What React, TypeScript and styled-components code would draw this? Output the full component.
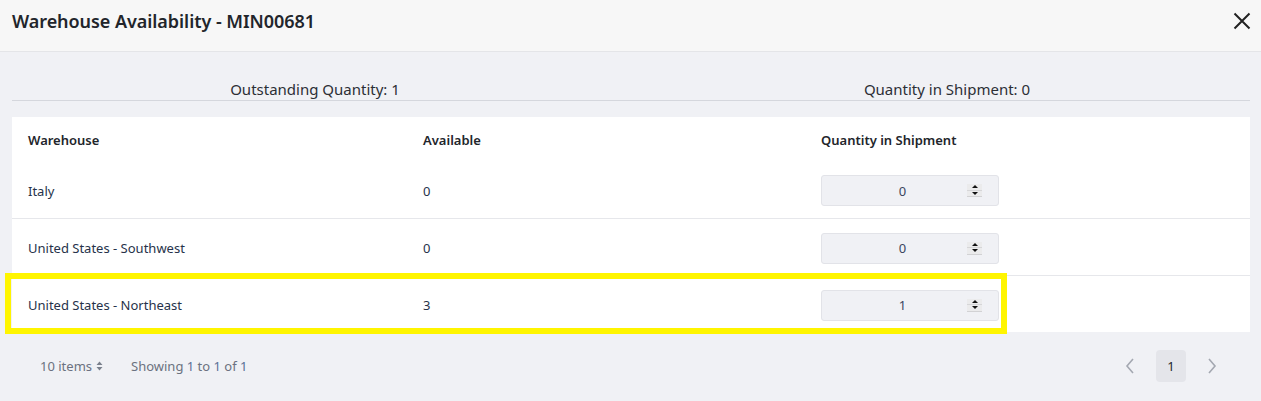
import React from "react";
import styled, { createGlobalStyle } from "styled-components";

const GlobalStyle = createGlobalStyle`
  html, body { margin: 0; padding: 0; }
  body {
    background: #f0f1f5;
    font-family: "Noto Sans", "Open Sans", Arial, sans-serif;
    color: #253148;
  }
  * { box-sizing: border-box; }
`;

const Dialog = styled.div`
  width: 1261px;
  height: 401px;
  background: #f0f1f5;
  display: flex;
  flex-direction: column;
`;

const Header = styled.div`
  height: 52px;
  background: #f7f7f7;
  border-bottom: 1px solid #e4e5e8;
  display: flex;
  align-items: center;
  justify-content: space-between;
  padding: 0 8px 10px 12px;
  flex-shrink: 0;
`;

const Title = styled.h1`
  margin: 0;
  font-size: 18px;
  font-weight: 600;
  color: #22252b;
  letter-spacing: -0.05px;
`;

const CloseButton = styled.button`
  border: 0;
  background: none;
  padding: 0;
  width: 22px;
  height: 22px;
  display: flex;
  align-items: center;
  justify-content: center;
  color: #222;
`;

const Body = styled.div`
  padding: 0 11px 0 12px;
  display: flex;
  flex-direction: column;
`;

const Summary = styled.div`
  display: grid;
  grid-template-columns: 606px 1fr;
  padding-top: 26px;
  border-bottom: 1px solid #d5d7dd;
  margin-bottom: 16px;
`;

const SummaryItem = styled.div<{ $offset?: number }>`
  text-align: center;
  font-size: 15px;
  line-height: 22px;
  color: #2c2f36;
  padding-left: ${(p) => p.$offset ?? 0}px;
`;

const Table = styled.div`
  background: #ffffff;
  display: flex;
  flex-direction: column;
`;

const Row = styled.div<{ $head?: boolean; $divider?: boolean }>`
  position: relative;
  display: grid;
  grid-template-columns: 395px 398px 1fr;
  align-items: center;
  padding-left: 16px;
  height: ${(p) => (p.$head ? "44px" : "57px")};
  border-top: ${(p) => (p.$divider ? "1px solid #e6e7eb" : "none")};
  font-size: 13px;
  font-weight: ${(p) => (p.$head ? 600 : 400)};
  color: ${(p) => (p.$head ? "#22252b" : "#26324a")};
  padding-top: 2px;
`;

const Highlight = styled.div`
  position: absolute;
  left: -7px;
  top: -3px;
  width: 1002px;
  height: 61px;
  border: 6px solid #fff500;
  pointer-events: none;
`;

const NumberInput = styled.div`
  width: 178px;
  height: 31px;
  background: #f0f1f5;
  border: 1px solid #e2e3e8;
  border-radius: 3px;
  display: flex;
  align-items: center;
  padding-right: 16px;
`;

const InputValue = styled.span`
  flex: 1;
  text-align: center;
  font-size: 13px;
  color: #3b4660;
  padding-left: 16px;
`;

const Spinner = styled.div`
  width: 15px;
  height: 13px;
  display: flex;
  flex-direction: column;
  background: #ebebec;
  border-bottom: 1px solid #d2d2d4;
`;

const SpinHalf = styled.div`
  flex: 1;
  display: flex;
  align-items: center;
  justify-content: center;
  & + & { border-top: 1px solid #d6d6d8; }
`;

const Footer = styled.div`
  display: flex;
  align-items: center;
  justify-content: space-between;
  height: 68px;
  padding: 0 42px 0 40px;
  font-size: 13px;
  color: #6b7180;
`;

const Info = styled.div`
  display: flex;
  align-items: center;
  gap: 28px;
`;

const PageSize = styled.span`
  display: flex;
  align-items: center;
  gap: 4px;
`;

const Num = styled.span`
  color: #5a6f96;
`;

const Pager = styled.div`
  display: flex;
  align-items: center;
  gap: 19px;
`;

const PageArrow = styled.span`
  width: 14px;
  display: flex;
  justify-content: center;
  color: #a4a8b1;
`;

const PageButton = styled.span`
  width: 30px;
  height: 32px;
  border-radius: 4px;
  background: #e4e5ea;
  display: flex;
  align-items: center;
  justify-content: center;
  color: #22252b;
  font-size: 13px;
`;

const Up = () => (
  <svg width="6" height="3" viewBox="0 0 6 3"><path d="M0 3 L3 0 L6 3 Z" fill="#111" /></svg>
);
const Down = () => (
  <svg width="6" height="3" viewBox="0 0 6 3"><path d="M0 0 L3 3 L6 0 Z" fill="#111" /></svg>
);

const rows = [
  { name: "Italy", available: 0, qty: 0 },
  { name: "United States - Southwest", available: 0, qty: 0 },
  { name: "United States - Northeast", available: 3, qty: 1, highlight: true },
];

export default function App() {
  return (
    <>
      <GlobalStyle />
      <Dialog>
        <Header>
          <Title>Warehouse Availability - MIN00681</Title>
          <CloseButton aria-label="Close">
            <svg width="18" height="18" viewBox="0 0 18 18">
              <path d="M1.5 1.5 L16.5 16.5 M16.5 1.5 L1.5 16.5" stroke="#222" strokeWidth="2" />
            </svg>
          </CloseButton>
        </Header>
        <Body>
          <Summary>
            <SummaryItem>Outstanding Quantity: 1</SummaryItem>
            <SummaryItem $offset={26}>Quantity in Shipment: 0</SummaryItem>
          </Summary>
          <Table>
            <Row $head>
              <span>Warehouse</span>
              <span>Available</span>
              <span>Quantity in Shipment</span>
            </Row>
            {rows.map((r, i) => (
              <Row key={r.name} $divider={i > 0}>
                <span>{r.name}</span>
                <span>{r.available}</span>
                <NumberInput>
                  <InputValue>{r.qty}</InputValue>
                  <Spinner>
                    <SpinHalf><Up /></SpinHalf>
                    <SpinHalf><Down /></SpinHalf>
                  </Spinner>
                </NumberInput>
                {r.highlight && <Highlight />}
              </Row>
            ))}
          </Table>
        </Body>
        <Footer>
          <Info>
            <PageSize>
              10 items
              <svg width="7" height="10" viewBox="0 0 7 10">
                <path d="M0.5 4 L3.5 0.5 L6.5 4 Z M0.5 6 L3.5 9.5 L6.5 6 Z" fill="#7a808c" />
              </svg>
            </PageSize>
            <span>
              Showing <Num>1</Num> to <Num>1</Num> of <Num>1</Num>
            </span>
          </Info>
          <Pager>
            <PageArrow>
              <svg width="10" height="16" viewBox="0 0 10 16"><path d="M8 1 L2 8 L8 15" fill="none" stroke="#a4a8b1" strokeWidth="1.6" /></svg>
            </PageArrow>
            <PageButton>1</PageButton>
            <PageArrow>
              <svg width="10" height="16" viewBox="0 0 10 16"><path d="M2 1 L8 8 L2 15" fill="none" stroke="#a4a8b1" strokeWidth="1.6" /></svg>
            </PageArrow>
          </Pager>
        </Footer>
      </Dialog>
    </>
  );
}
